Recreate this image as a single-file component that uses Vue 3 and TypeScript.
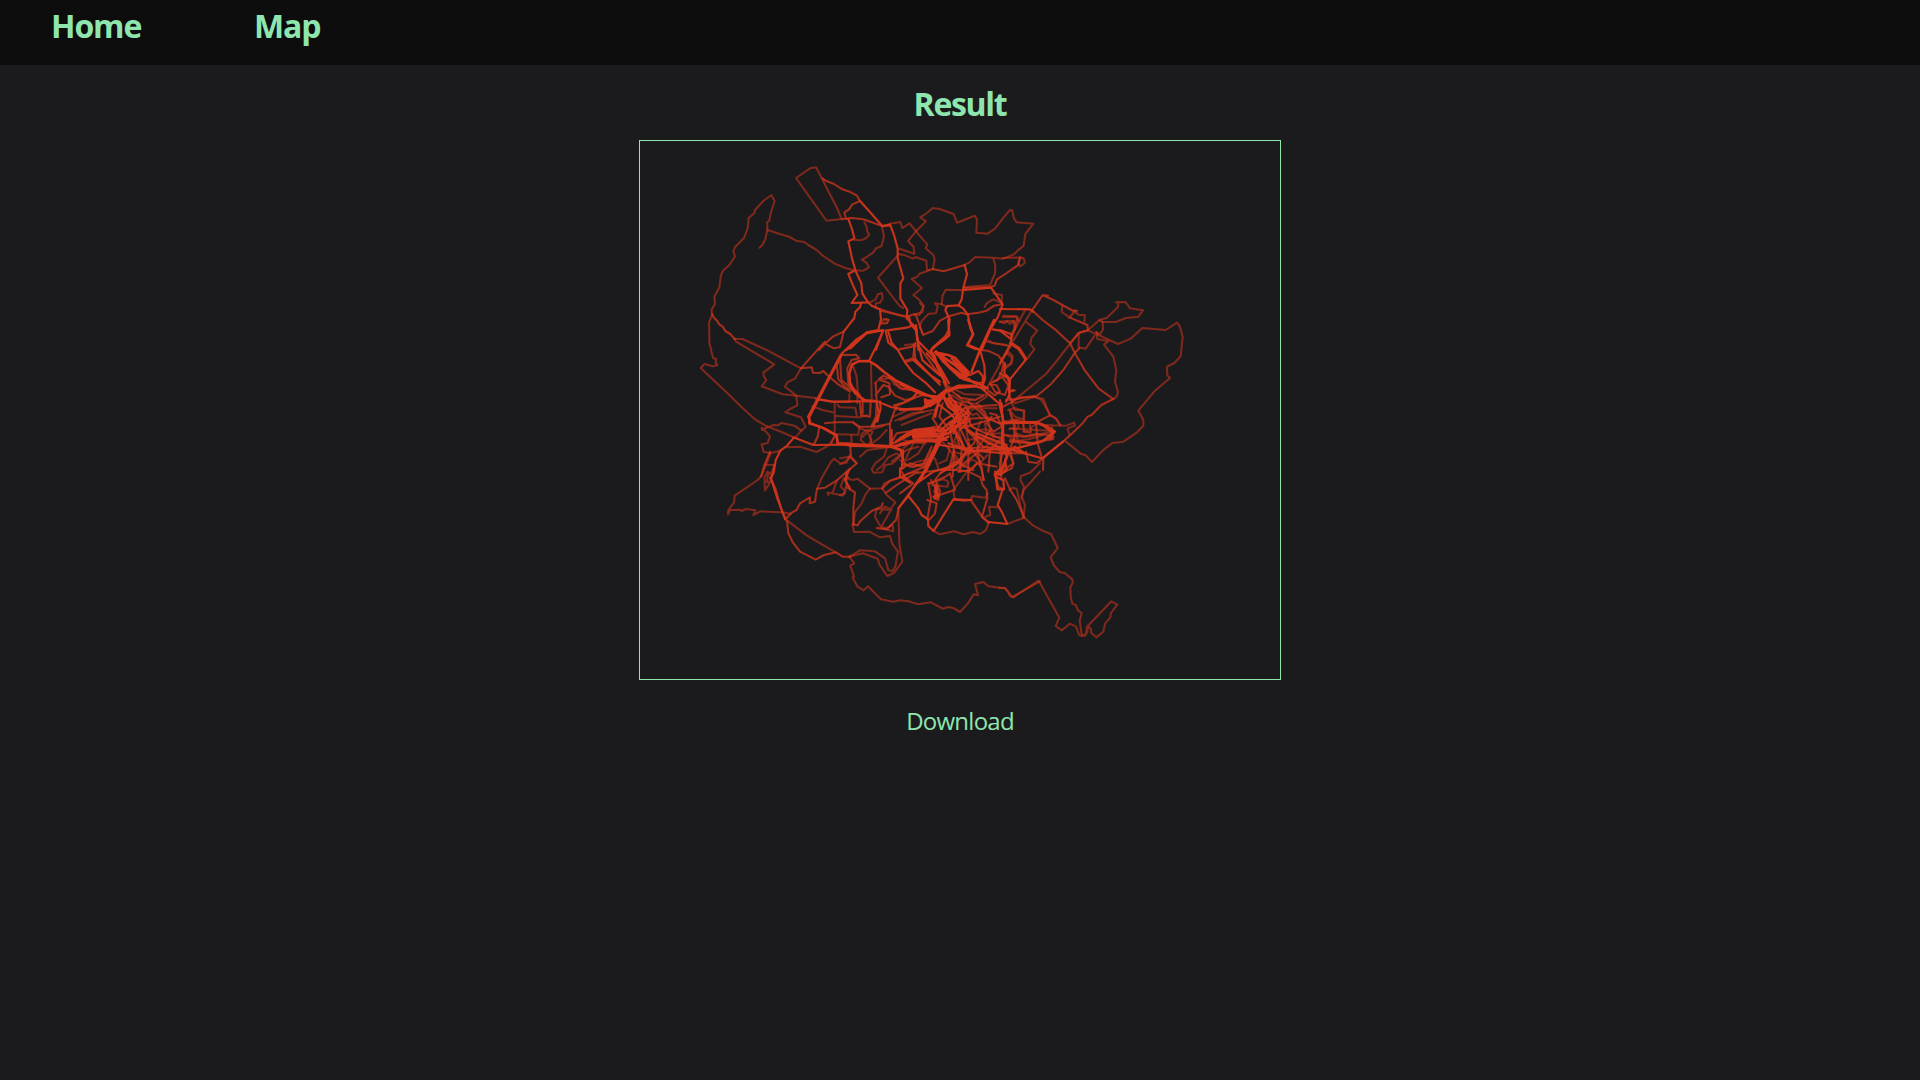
<script setup lang="ts">
interface Sheet {
  x: number
  y: number
  faint: string[]
  medium: string[]
  strong: string[]
  heavy?: string[]
}

// Every sheet holds its tracks in third-of-a-pixel units from its own origin.
const sheets: Sheet[] = [
  {
    x: 690,
    y: 150,
    faint: [
      'M408 210L318 84L360 55L378 52L397 88L418 130L437 165L455 207L410 212',
      'M66 492L65 478L75 462L73 440L88 412L93 375L99 362L118 345L135 319L130 303L136 290L162 264L173 235L176 204L194 188L195 180L220 153L244 135L254 153L242 190L238 212L232 216L232 240L226 268L217 285L209 293',
      'M232 240L260 249L299 261L318 272L343 276L355 285L380 300L396 315L434 341L466 354L492 361L520 362L537 352L530 339L516 329L530 321L550 307L558 295L574 289L582 260L576 230',
      'M523 217L530 230L532 245L538 254L529 264L513 271L490 269',
      'M540 457L557 448L563 433L576 429L578 445L570 458L558 460L556 473L570 478',
      'M66 495L57 518L58 550L58 580L64 600',
      'M575 515L588 507L596 510L589 520L575 519'
    ],
    medium: [
      'M66 492L72 503L80 511L88 523L98 530L106 543L121 552L134 567',
      'M397 85L411 94L432 102L457 118L479 125L501 137L510 153L487 163L477 178L463 187L468 206',
      'M455 208L485 204L520 208L577 228',
      'M387 600L405 581L430 559L461 545L450 591L432 595L405 581'
    ],
    strong: [
      'M510 153L531 176L577 228L600 226',
      'M475 207L486 237L493 265L475 274L486 325L496 360L475 372L484 394L502 435L485 459L534 457L517 430L514 400L497 363',
      'M534 457L545 467L570 478L573 508L565 540L530 547L470 600',
      'M513 460L510 472L496 485L493 504L461 545'
    ]
  },
  {
    x: 850,
    y: 150,
    faint: [
      'M120 221L151 216L157 234L179 220L198 244L174 273L191 291L193 311L148 296',
      'M198 244L228 214L211 202L231 189L248 174L269 177L311 192L321 218L374 197L381 208L379 248L413 251L435 236L461 202L480 180L487 181L491 204L500 217L550 221L526 252L521 287L504 301L492 313L459 326L432 323L376 321L357 338L344 344',
      'M198 244L216 265L232 283L227 295L250 315L254 330L248 358',
      'M146 312L165 316L189 326L197 321L229 332L231 361L248 358',
      'M142 318L84 383L121 432L148 467L160 474',
      'M240 360L209 371L202 380L185 387L216 414L190 435L207 449L221 467L217 487L195 493',
      'M344 421L287 419L278 436L275 463L293 471',
      'M275 463L255 460L263 470L258 490L236 491L215 513L209 531L219 554',
      'M458 324L510 322L521 325L525 339L510 349L504 340L510 322',
      'M430 327L436 345L435 370L420 405L344 411',
      'M404 471L410 460L429 448L455 458L456 435L430 430',
      'M458 501L500 500L503 513',
      'M449 515L470 513L480 522L493 512L497 530L484 550',
      'M415 571L431 580L468 584L482 590',
      'M148 597L184 590L197 580 M100 507L116 509L111 520L93 521'
    ],
    medium: [
      'M248 357L281 364L344 345',
      'M344 414L424 411L434 407L441 388L470 369L506 344L510 322',
      'M291 500L334 488L350 493L385 488L410 482L432 467L455 463',
      'M93 482L131 491L172 500L191 493L199 498L219 554L248 543L270 512L294 500'
    ],
    strong: [
      'M97 229L120 223L132 255L143 295L143 325L160 385L151 400L151 445L172 480L170 505L199 535L205 600',
      'M344 345L351 373L340 413L335 448L326 466L340 476L354 495L361 535L370 553L351 586L375 597',
      'M326 466L291 468L286 480L299 507L296 541L286 559L246 595',
      'M344 420L423 413L458 463L444 500L420 541L395 600',
      'M0 596L50 550L100 540L78 600',
      'M107 542L115 578L140 597 M107 542L170 533L189 526'
    ]
  },
  {
    x: 1000,
    y: 270,
    faint: [
      'M96 121L40 212 M74 123L58 152L34 200 M76 154L112 182L94 204L91 222L103 238L80 268',
      'M45 389L138 312L170 273L235 189L262 182L298 150L320 144L354 111L355 98L348 97L377 96L390 115L429 121L415 140L378 144L347 156L308 156L309 178L300 193L288 186',
      'M298 150L308 156 M263 181L302 198L354 222L392 206L427 174L497 180L531 158L540 170L548 200L542 259L523 279L501 290L502 316L510 324L465 362L415 422L430 450L430 467L411 487L370 515L337 519L311 539L276 576L257 556L242 551L197 514',
      'M236 190L236 232L257 236L284 197',
      'M290 187L292 207L325 214L312 224L340 260L349 300L345 335L354 366L350 380L340 387',
      'M187 108L185 126L210 143 M210 143L223 122L235 134L255 136L253 154 M230 122L205 143',
      'M10 137L50 139L58 152 M0 155L15 160L22 152L40 153L45 180',
      'M20 250L37 264L32 280L17 290',
      'M24 420L45 414L73 424L72 458 M30 420L37 451L53 450L56 475L28 477 M70 460L72 486L92 488L95 470L112 460',
      'M37 364L25 360L45 362',
      'M105 381L122 388L131 400L150 436L165 444L181 466',
      'M140 465L158 466L200 467L222 458L225 466L203 476L208 494 M155 465L160 490'
    ],
    medium: [
      'M96 121L128 75L160 90L187 105L218 122L230 122 M128 75L144 77',
      'M210 143L262 165L264 180L238 188L210 220',
      'M96 121L128 150L165 178L210 220L225 250L255 302L296 356L340 387',
      'M238 235L225 248L190 300L154 341L125 366L105 381L60 382L10 410',
      'M340 387L304 405L275 435L263 440L245 463L208 498L190 514L140 554L128 565',
      'M108 458L150 436 M108 458L113 520L126 565',
      'M10 495L70 500L108 492L150 495 M30 515L90 520L160 507',
      'M78 545L85 575L110 579L130 565L129 600'
    ],
    strong: [
      'M0 117L90 118L100 126',
      'M0 180L34 193L34 218L59 235L79 267L30 328L0 310 M34 218L0 280',
      'M15 280L13 310L30 328L28 380L38 397',
      'M5 400L8 458L5 510L20 545 M0 460L108 458L130 467L160 490L150 505',
      'M128 565L190 514 M20 545L45 530L75 550'
    ]
  },
  {
    x: 690,
    y: 300,
    faint: [
      'M64 155L70 175L79 176L77 187L82 195L69 199L44 192L32 204L100 268L160 326L195 358L230 379L275 396L313 413',
      'M134 117L137 124L253 193L220 218L222 230L229 240L215 259L278 283L318 287L377 294',
      'M134 117L158 117L230 150L333 205L316 235L292 247L285 260L319 287L322 316L300 327L286 337L333 352L347 380L334 392L316 413',
      'M243 378L250 375L263 376L275 369L313 377L334 392',
      'M285 442L330 440L380 456L415 437L436 409',
      'M367 319L400 331L435 338 M434 309L434 405L423 433'
    ],
    medium: [
      'M333 205L399 131L405 125',
      'M333 205L365 202L369 218L389 219L400 213L415 228L446 254L480 275',
      'M377 296L430 305L480 306 M388 380L383 410L371 434'
    ],
    strong: ['M450 168L354 350L362 370L410 388L440 406L443 430L480 431', 'M310 412L370 435L480 434']
  },
  {
    x: 780,
    y: 300,
    faint: [
      'M302 28L365 48L385 50 M420 10L430 20L418 45L405 42',
      'M355 149L410 137 M218 193L230 230L233 270L232 310',
      'M168 348L238 352L262 346 M172 314L180 322L226 323L230 347 M165 403L235 404L238 380L220 367',
      'M273 190L275 300 M208 283L208 304',
      'M285 250L300 235L315 238L330 232L342 252L370 268L392 262',
      'M346 362L398 339L430 337 M340 350L380 332',
      'M240 385L260 392L275 420L262 440 M248 410L268 390L310 378',
      'M214 405L215 440 M270 435L299 413L320 390 M370 445L395 425',
      'M240 470L262 450L340 440',
      'M384 480L415 460L436 425'
    ],
    medium: [
      'M184 168L170 195L175 238L197 262L230 277 M180 177L184 240L220 270',
      'M181 165L228 164L238 175L215 180L202 205L205 250L240 285',
      'M135 370L165 367L219 367L235 380L281 380L327 372',
      'M240 310L243 346L270 350L272 304 M248 310L248 340',
      'M287 250L290 302L288 350L274 379 M287 285L310 255L325 260L345 287L375 300L400 295L410 280',
      'M300 240L328 250L330 283L304 292 M300 235L310 227L340 240L360 265L390 270',
      'M345 328L330 370L330 440 M342 316L370 308L400 295L425 286',
      'M402 136L406 178L375 187 M410 280L390 300L345 320L350 328',
      'M328 440L350 400L390 394L440 393'
    ],
    strong: [
      'M325 96L335 128L353 149L375 187L400 219L440 251L465 277',
      'M406 178L430 203L465 239L480 254 M400 180L450 225L480 245',
      'M267 183L286 145L309 92 M184 162L228 119L265 96L309 92',
      'M116 298L155 305L218 304L290 304L333 321L370 328L425 328L440 319',
      'M290 304L296 340L280 378 M300 304L302 325L292 365',
      'M387 50L392 72L409 93L417 140L427 180L445 196L480 226'
    ],
    heavy: [
      'M226 280L210 249L208 220L216 194L235 184L267 183L290 197L315 218L350 243L390 262L430 280L465 296',
      'M250 300L225 278L210 249 M234 287L255 301L290 304',
      'M88 370L125 382L170 407L173 431L220 437L340 440L375 433L410 421L480 424',
      'M330 440L362 450L370 480 M348 425L390 397L460 395',
      'M184 165L145 240L88 350L88 370'
    ]
  },
  {
    x: 900,
    y: 320,
    faint: [
      'M15 75L45 72 M350 0L348 15L330 70 M330 80L263 200',
      'M260 65L328 78 M307 115L325 95L338 108L335 130L309 151',
      'M345 250L404 230L430 237 M430 237L440 262L450 285L470 296L480 315',
      'M0 300L60 277L105 269 M5 315L94 280',
      'M155 225L185 245L227 252L260 230 M190 265L238 260L260 290L300 310',
      'M230 250L250 265L290 265 M160 395L195 405L240 390L270 370',
      'M335 250L345 270L372 271L370 299L330 300 M328 270L345 290L372 299 M330 278L338 299',
      'M370 310L370 334L390 335L390 314 M330 325L460 333 M345 340L380 350L465 334',
      'M265 300L278 350L300 351 M255 310L259 343L300 340 M242 305L225 345L240 360',
      'M162 400L190 441L215 418L240 430L262 405 M145 385L170 420L150 450',
      'M75 360L111 350L149 388L140 420L118 430 M172 340L162 365L190 389',
      'M0 420L30 440L75 430L95 395 M10 360L42 368L77 370',
      'M200 270L218 285L231 280L243 295 M147 200L195 223L260 225',
      'M210 315L232 330L262 328L282 345 M205 360L250 352L300 372 M215 270L232 262L255 275L262 300',
      'M175 225L190 245L215 240 M318 345L350 362L385 358L430 345 M345 315L350 350L360 375'
    ],
    medium: [
      'M45 70L39 115L15 123 M54 75L104 145L130 175L150 215',
      'M240 90L263 92L295 106L311 128L305 156L293 180L270 190L285 215L315 225L325 196L310 175',
      'M270 193L290 196L300 215L284 226L264 211 M280 185L318 165L327 183',
      'M328 215L342 210 M318 240L345 237L404 228',
      'M130 185L154 240L205 260L290 255 M152 210L180 233L225 240L249 228',
      'M175 285L198 261L210 280L193 319L155 318 M190 296L260 294L300 311',
      'M185 297L210 340L245 355L305 385 M180 325L235 310L299 290',
      'M305 310L415 305 M309 303L312 385L299 430L305 480',
      'M340 300L344 350L329 390',
      'M462 333L430 363L350 385 M330 360L405 370L461 350',
      'M158 325L186 370L180 455 M175 315L205 375L205 480 M150 330L162 394L158 470',
      'M190 385L305 380L350 391L380 402',
      'M162 390L148 445L120 460L105 480 M205 370L245 432L290 440',
      'M230 390L240 430L252 480 M270 330L230 390 M300 360L270 390L265 455',
      'M0 450L30 430L70 440L103 400L122 345 M5 455L20 480',
      'M80 330L101 320L130 325 M110 260L98 295L120 330',
      'M128 250L118 290L145 325 M140 245L174 290L205 320',
      'M175 455L215 450L230 430 M120 460L165 425L220 450 M330 390L340 430L290 465',
      'M270 280L290 285L305 320L280 335L260 310L275 290',
      'M205 245L240 275L262 298 M215 258L190 285L210 300L180 330 M230 345L222 370L200 390',
      'M207 300L215 320L245 335L300 355'
    ],
    strong: [
      'M48 15L51 60L96 106L124 149L147 190 M80 100L115 140L138 190',
      'M240 90L253 136L255 177L245 205 M210 165L235 153L248 168L249 186L230 193L208 180',
      'M148 225L200 300L150 338 M132 230L185 290L160 340',
      'M165 250L205 285L192 305L140 330 M118 255L150 280L182 315',
      'M105 335L135 298L170 278L185 250 M118 335L152 305L205 278',
      'M300 240L310 305L305 385L320 408L304 455',
      'M245 205L297 250L311 305 M326 180L328 225L318 245',
      'M376 118L355 87L330 70 M330 55L300 32L278 28',
      'M310 305L410 306L440 318L465 335L425 365L325 391L265 370L220 340L190 320',
      'M425 415L381 402L315 385L210 394L145 370',
      'M290 480L285 455L302 465L320 450L315 420'
    ],
    heavy: [
      'M145 0L148 45L134 58L105 79L92 92L104 110L112 140L138 192',
      'M205 0L219 43L203 75L240 90L282 0 M240 90L215 155',
      'M105 97L144 105L165 113L185 135L207 158L199 170L167 137L138 117L105 97L150 140L195 173 M112 100L169 137L195 149 M155 115L205 165',
      'M108 94L130 125L180 173L208 178 M120 105L150 145L190 177L230 188L263 205',
      'M138 215L175 203L228 199L255 207 M135 215L175 197L220 197',
      'M0 192L70 225L112 230L135 212 M75 243L115 240L138 210',
      'M0 269L67 265L115 230 M78 240L90 258L120 238 M75 238L78 262L100 248',
      'M135 220L115 248L105 290 M125 220L145 260L173 280L180 310L145 340L118 350',
      'M145 235L170 273L168 305L135 335L105 365 M165 245L174 285L150 315',
      'M0 372L50 364L116 363L145 350 M0 355L42 330L92 325L115 332L140 330',
      'M40 336L104 340L112 349L40 353L38 338L102 331 M45 348L115 347 M50 341L103 345',
      'M120 350L85 425L62 480 M128 350L102 400L80 440L60 480'
    ]
  },
  {
    x: 690,
    y: 410,
    faint: [
      'M242 130L214 198L203 210L134 257L132 278L115 300L114 313L120 300L150 299L155 303L168 297L196 301L190 315L210 304L275 307L302 311',
      'M236 50L216 60L215 53L228 65L240 80L233 99L215 103L221 126L242 129L271 122',
      'M224 164L255 165L242 192L232 185L223 204L225 241L242 214L230 216L235 190',
      'M292 332L350 376L402 407L438 427',
      'M382 235L395 204L423 155L432 146L452 161L465 155L480 141',
      'M415 255L412 248L427 250L459 257L465 242L452 230L461 205L476 202 M427 250L441 211'
    ],
    medium: [
      'M240 125L224 164L213 200 M253 164L250 187L245 203',
      'M244 208L257 238L274 298L286 328',
      'M286 328L305 308L320 300L330 280L360 262L359 280L375 275L381 236L405 233L441 211L480 176',
      'M291 332L295 370L309 398L330 425L377 449L402 435L438 427L458 440L480 440'
    ],
    strong: ['M310 85L290 108L271 122L257 151L251 188L240 205', 'M244 208L262 265L286 328', 'M477 180L465 210L480 235']
  },
  {
    x: 840,
    y: 430,
    faint: [
      'M0 102L20 98L30 75 M0 195L15 190L17 172 M65 12L62 30L79 45L95 44L90 20L98 5L80 0L65 12',
      'M140 57L132 80L105 101L95 118L101 128L126 127L136 105L157 101L182 77L169 70L145 82L126 108L110 120',
      'M18 145L40 150L52 146L90 176L127 175L132 160L205 130L235 125',
      'M90 176L76 194L65 220L45 246L40 285',
      'M127 175L140 195L166 217L150 240L110 236L105 260L125 295L160 304L158 285L140 295L124 290L154 238L135 230L120 250L130 235',
      'M38 285L42 306L88 305L120 322L150 318L156 340L174 365L166 410L158 423L145 421L135 385L105 364L60 361L45 370L28 380',
      'M28 380L68 370L113 386L118 403L142 438L162 429L187 395L178 340L175 240',
      'M28 380L43 400L31 407L42 440L38 443L53 470L71 481L84 469L123 508L160 515L180 511L205 514L235 523L273 517L308 536L326 531L342 535L360 546L383 521L401 493L414 496L405 462L430 456L445 469L495 475L517 501L600 454',
      'M281 303L300 313L342 304L370 313L400 306L421 312L437 301L446 279',
      'M502 282L550 264L555 225L545 200L552 170L541 150L543 138L570 128L600 100',
      'M508 180L518 173L530 177L550 264 M600 125L551 180L545 205',
      'M344 208L340 180L380 126 M392 210L397 198L436 203L443 190',
      'M436 260L451 255L447 230L473 232 M380 5L390 60L350 105L310 120',
      'M210 105L230 95L285 85L295 115 M355 0L375 65L360 115',
      'M155 95L200 60L235 50 M265 160L310 148L325 155L323 170L275 165',
      'M220 40L200 80L190 115 M0 85L28 80L50 100'
    ],
    medium: [
      'M30 45L33 80L50 100L18 128L20 172L45 187L40 235L40 280',
      'M38 283L53 286L61 273L95 243L125 230L128 220 M127 175L150 152L180 143L230 120L269 105',
      'M137 189L170 165L225 130L300 120L346 120L410 70',
      'M265 160L273 205L262 268 M273 150L290 180L282 205L295 210L300 183L290 158L283 185L292 195',
      'M262 210L290 220L285 250L269 268 M270 160L315 141L330 130L345 180L280 200',
      'M345 120L384 124L421 142L428 165L440 180L442 205L426 260L446 279',
      'M392 210L428 262L446 276 M395 210L370 212L344 208',
      'M175 240L168 270L140 298L110 294 M205 198L175 235',
      'M190 103L220 111L250 102L275 50 M190 140L220 160L180 190',
      'M383 125L412 100L425 112L430 150',
      'M475 135L515 115L520 100L505 60 M495 145L510 178L530 210L553 262',
      'M480 60L485 110L464 133L475 170L490 178 M410 5L415 70L430 85',
      'M345 5L360 50L390 70 M380 0L430 50L520 70L550 70'
    ],
    strong: [
      'M205 198L235 235L245 255L264 268L265 288L281 303L340 208L392 210',
      'M446 276L502 282L485 245L473 225L488 178L472 178L467 140L490 150L492 178',
      'M464 133L490 112L505 70L500 50 M180 115L180 140L210 158',
      'M205 198L225 165L270 100L315 5 M175 235L260 120L310 0',
      'M0 40L155 48L190 62L185 115 M500 45L410 10',
      'M155 0L155 50L230 28L320 30 M160 40L215 12L320 10',
      'M300 45L410 63L500 70 M290 170L295 200L287 205L287 170',
      'M345 0L380 65L345 105L280 125L230 160'
    ]
  },
  {
    x: 1000,
    y: 470,
    faint: [
      'M71 141L100 167L132 184L153 192L163 212L173 234L152 262L161 285L179 306L194 309L217 328L218 338L211 353L212 380L217 401L227 405L234 421L245 429L239 452L245 495',
      'M-3 354L15 354L25 366L30 378L40 382L116 332L178 443L167 468L185 481L210 461L228 470L238 496L254 498L262 487L264 467L273 477L274 489L289 502L310 485L315 461L331 442L332 430L352 404L334 394L290 440L261 470L258 492L245 498'
    ],
    medium: [],
    strong: []
  }
]

const links: string[] = ['Home', 'Map']
</script>

<template>
  <div class="page">
    <nav class="bar">
      <a v-for="link in links" :key="link" class="link">{{ link }}</a>
    </nav>
    <main class="content">
      <h1 class="title">Result</h1>
      <svg class="map" viewBox="639 140 642 540" fill="none" stroke-linejoin="round" stroke-linecap="round">
        <g v-for="(sheet, i) in sheets" :key="i" :transform="`translate(${sheet.x} ${sheet.y}) scale(0.33333)`">
          <path v-for="(d, n) in sheet.faint" :key="`f${n}`" class="faint" :d="d" />
          <path v-for="(d, n) in sheet.medium" :key="`m${n}`" class="medium" :d="d" />
          <path v-for="(d, n) in sheet.strong" :key="`s${n}`" class="strong" :d="d" />
          <path v-for="(d, n) in sheet.heavy ?? []" :key="`h${n}`" class="heavy" :d="d" />
        </g>
      </svg>
      <a class="download">Download</a>
    </main>
  </div>
</template>

<style>
body {
  margin: 0;
  background: #1b1b1d;
}
</style>

<style scoped>
.page {
  min-height: 1080px;
  background: #1b1b1d;
  color: #8ee6ae;
  font-family: 'Open Sans', 'Noto Sans', sans-serif;
}
.bar {
  display: flex;
  height: 65px;
  box-sizing: border-box;
  padding: 4px 0 0 51px;
  background: #0d0d0d;
}
.link {
  width: 203px;
  font-size: 32px;
  line-height: 43px;
  font-weight: 700;
  letter-spacing: -1.1px;
}
.content {
  display: flex;
  flex-direction: column;
  align-items: center;
}
.title {
  margin: 17px 0 15px;
  font-size: 32px;
  line-height: 43px;
  font-weight: 700;
  letter-spacing: -1.3px;
}
.map {
  display: block;
  width: 642px;
  height: 540px;
  box-sizing: border-box;
  outline: 1px solid #8ee6ae;
  outline-offset: -1px;
}
.faint {
  stroke: #d2351c;
  stroke-opacity: 0.54;
  stroke-width: 6.2;
}
.medium {
  stroke: #d2351c;
  stroke-opacity: 0.75;
  stroke-width: 6.2;
}
.strong {
  stroke: #d2351c;
  stroke-opacity: 0.95;
  stroke-width: 6.4;
}
.heavy {
  stroke: #d2351c;
  stroke-width: 7.6;
}
.download {
  margin-top: 25px;
  font-size: 24px;
  line-height: 32px;
  letter-spacing: -0.75px;
}
</style>
